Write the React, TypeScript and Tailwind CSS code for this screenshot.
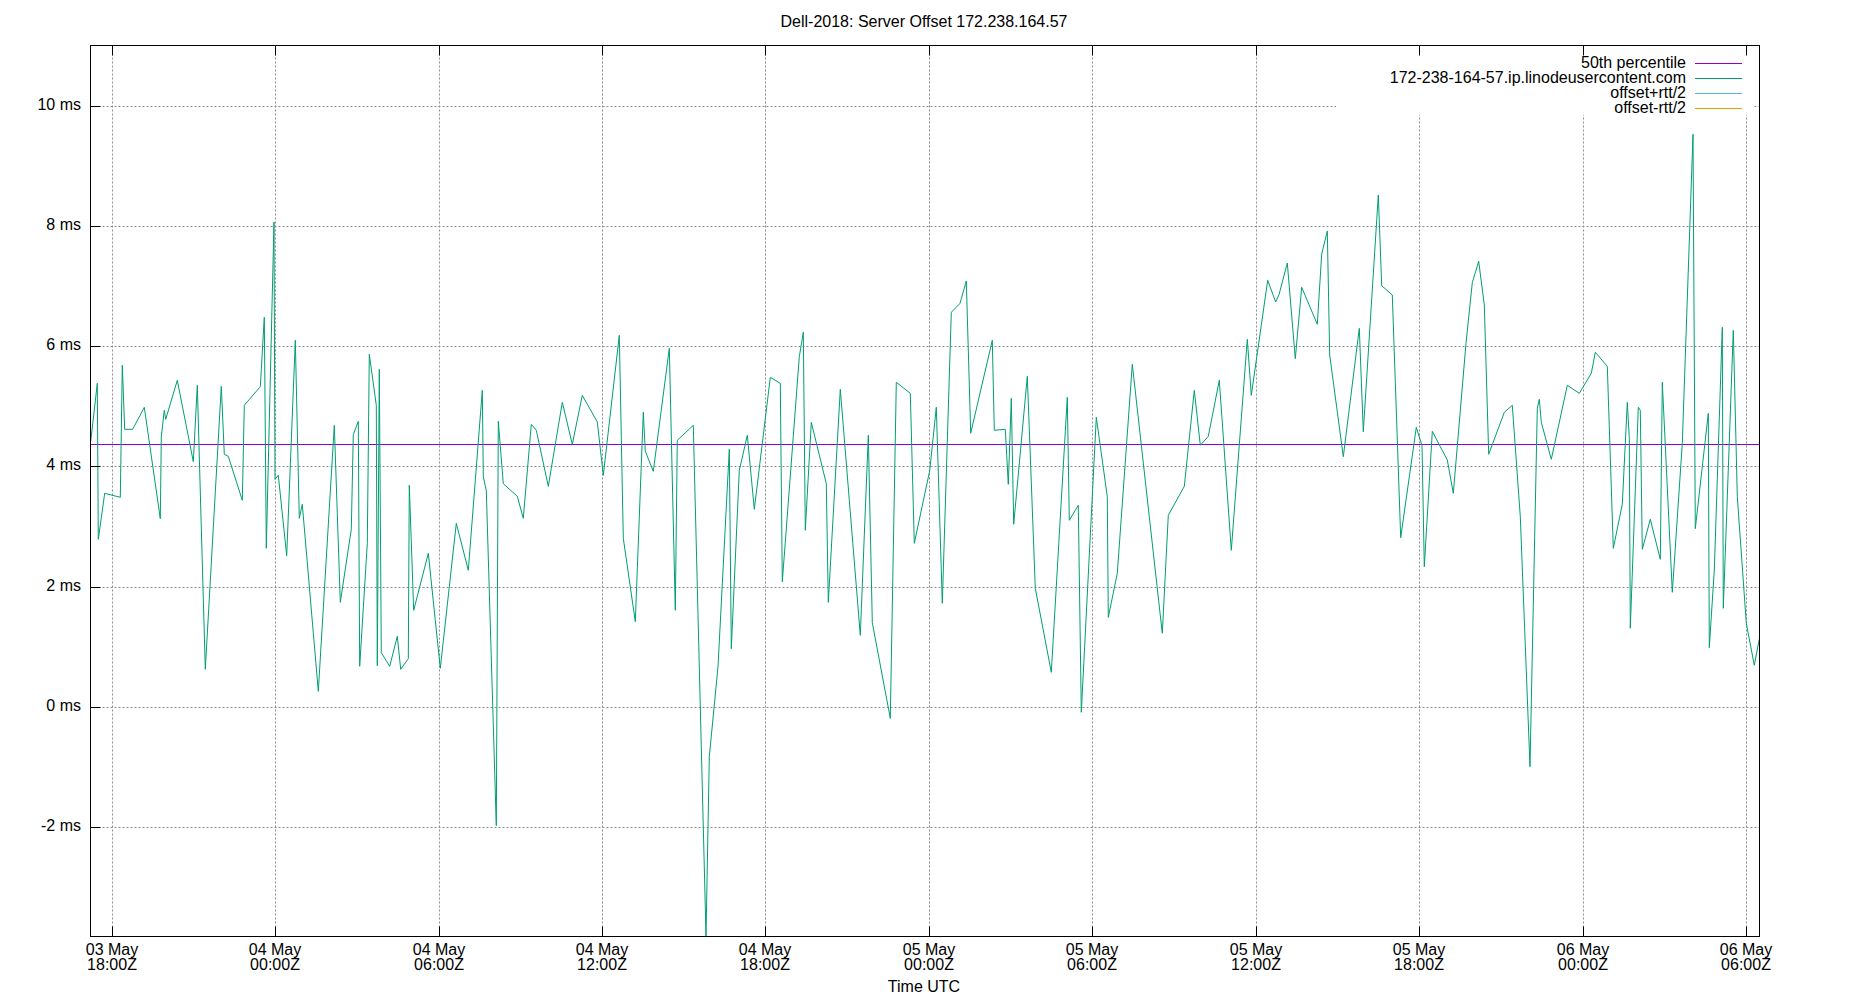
import React from "react";

type Pt = [number, number];

// traced offsets, grouped by the strip they were read from (x from strip start, y from 300, both x3)
const strips: [number, Pt[]][] = [
  [88, [[8,425],[28,250],[31,718],[50,580],[97,592],[103,196],[110,388],[134,388],[169,322],[217,656],[220,410],[229,331],[233,358],[268,241],[316,485],[328,256],[352,1108],[400,259],[409,463],[421,469],[463,601],[469,316],[517,260],[529,52],[535,745],[558,-234],[561,538],[571,526],[596,767],[622,121],[634,655],[643,613],[691,1174],[739,376],[757,907],[790,688],[796,404],[811,364],[815,1099],[838,730],[844,163],[865,316],[868,1097],[874,208],[880,1058],[905,1099],[928,1009],[938,1108],[961,1076],[964,556],[977,931]]],
  [428, [[1,760],[37,1105],[85,670],[121,811],[163,271],[166,530],[175,572],[205,1577],[211,364],[226,551],[268,589],[286,655],[310,373],[325,391],[361,559],[403,307],[433,433],[463,286],[508,366],[526,526],[574,106],[586,715],[622,965],[646,337],[652,454],[676,514],[724,145],[742,931],[748,421],[796,376],[834,1908],[844,1370],[870,1100],[904,448],[910,1046],[934,511],[958,406],[979,628]]],
  [768, [[7,232],[37,250],[43,845],[94,170],[106,97],[112,691],[130,367],[175,551],[181,907],[217,268],[277,1006],[301,406],[313,968],[367,1255],[385,247],[427,280],[439,730],[485,512],[505,322],[523,910],[550,37],[576,10],[595,-57],[608,400],[673,121],[679,391],[712,388],[721,553],[730,295],[737,673],[778,229],[802,865],[850,1117],[898,292],[904,661],[931,616],[940,1237],[985,352],[1018,590]]],
  [1108, [[1,952],[28,820],[73,193],[163,1000],[181,646],[229,559],[259,271],[277,436],[301,409],[334,241],[370,751],[418,118],[430,286],[479,-59],[503,6],[513,-16],[538,-111],[562,176],[581,-38],[628,73],[641,-138],[658,-207],[665,165],[706,470],[754,85],[766,395],[811,-315],[821,-43],[853,-15],[878,713],[925,382],[942,437],[949,800],[973,394],[1018,480]]],
  [1440, [[40,580],[78,130],[97,-52],[116,-116],[133,15],[146,463],[193,337],[217,316],[241,650],[270,1400],[292,325],[298,298],[304,367],[334,478],[382,256],[418,280],[454,220],[466,157],[502,199],[520,745],[547,613],[562,307],[568,415],[571,985],[595,322],[601,331],[607,748],[631,658],[661,778],[667,247],[697,877],[727,430],[759,-497],[766,686],[805,340],[808,1043],[823,810],[847,82],[850,925],[880,91],[892,590],[919,970],[943,1096],[958,1017]]],
];

const offsetLine = strips
  .flatMap(([x0, pts]) => pts.map(([x, y]) => `${(x0 + x / 3).toFixed(1)},${(300 + y / 3).toFixed(1)}`))
  .join(" ");

const xTicks = [
  { x: 112.5, day: "03 May", time: "18:00Z" },
  { x: 275.5, day: "04 May", time: "00:00Z" },
  { x: 439.5, day: "04 May", time: "06:00Z" },
  { x: 602.5, day: "04 May", time: "12:00Z" },
  { x: 765.5, day: "04 May", time: "18:00Z" },
  { x: 929.5, day: "05 May", time: "00:00Z" },
  { x: 1092.5, day: "05 May", time: "06:00Z" },
  { x: 1256.5, day: "05 May", time: "12:00Z" },
  { x: 1419.5, day: "05 May", time: "18:00Z" },
  { x: 1583.5, day: "06 May", time: "00:00Z" },
  { x: 1746.5, day: "06 May", time: "06:00Z" },
];

const yTicks = [
  { y: 106.5, label: "10 ms" },
  { y: 226.5, label: "8 ms" },
  { y: 346.5, label: "6 ms" },
  { y: 466.5, label: "4 ms" },
  { y: 587.5, label: "2 ms" },
  { y: 707.5, label: "0 ms" },
  { y: 827.5, label: "-2 ms" },
];

const legend = [
  { label: "50th percentile", color: "bg-[#9400d3]" },
  { label: "172-238-164-57.ip.linodeusercontent.com", color: "bg-[#009e73]" },
  { label: "offset+rtt/2", color: "bg-[#56b4e9]" },
  { label: "offset-rtt/2", color: "bg-[#e69f00]" },
];

const LEFT = 90.5;
const RIGHT = 1759.5;
const TOP = 45.5;
const BOTTOM = 936.5;

export default function App() {
  return (
    <div className="w-[1850px] h-[1000px] bg-white text-black text-base [font-family:'Liberation_Sans',Arial,sans-serif]">
      <h1 className="ml-[90px] w-[1668px] h-[45px] pt-[13px] text-center text-base leading-[18px] font-normal">
        Dell-2018: Server Offset 172.238.164.57
      </h1>

      <div className="relative h-[930px]">
        <svg width={1850} height={930} viewBox="0 45 1850 930" className="block fill-black">
          {/* grid */}
          <g className="stroke-[#8c8c8c]" strokeWidth={1} strokeDasharray="2 2">
            {yTicks.map((t) => (
              <line key={t.y} x1={LEFT} x2={RIGHT} y1={t.y} y2={t.y} />
            ))}
            {xTicks.map((t) => (
              <line key={t.x} x1={t.x} x2={t.x} y1={TOP} y2={BOTTOM} />
            ))}
          </g>

          {/* key box hides the grid behind the legend */}
          <rect x={1336} y={46} width={417} height={69} className="fill-white" />

          <line x1={LEFT} x2={RIGHT} y1={444.5} y2={444.5} strokeWidth={1} className="stroke-[#9400d3]" />
          <polyline points={offsetLine} fill="none" strokeWidth={1} className="stroke-[#009e73]" />

          {/* ticks and border */}
          <g className="stroke-black" strokeWidth={1}>
            {yTicks.map((t) => (
              <line key={t.y} x1={LEFT} x2={LEFT + 10} y1={t.y} y2={t.y} />
            ))}
            {xTicks.map((t) => (
              <React.Fragment key={t.x}>
                <line x1={t.x} x2={t.x} y1={TOP} y2={TOP + 10} />
                <line x1={t.x} x2={t.x} y1={BOTTOM} y2={BOTTOM - 10} />
              </React.Fragment>
            ))}
            <rect x={LEFT} y={TOP} width={RIGHT - LEFT} height={BOTTOM - TOP} fill="none" />
          </g>

          {yTicks.map((t) => (
            <text key={t.y} x={81} y={t.y + 3} textAnchor="end">
              {t.label}
            </text>
          ))}
          {xTicks.map((t) => (
            <text key={t.x} x={t.x - 0.5} textAnchor="middle">
              <tspan x={t.x - 0.5} y={955}>{t.day}</tspan>
              <tspan x={t.x - 0.5} y={970}>{t.time}</tspan>
            </text>
          ))}
        </svg>

        <div className="absolute top-[11px] right-[108px] flex flex-col">
          {legend.map((item) => (
            <div key={item.label} className="flex h-[15px] items-center justify-end gap-[9px] whitespace-nowrap leading-[15px]">
              <span className="mb-[2px]">{item.label}</span>
              <span className={`w-[47px] h-px ${item.color}`} />
            </div>
          ))}
        </div>
      </div>

      <div className="ml-[90px] w-[1668px] text-center leading-[18px] pt-[3px]">Time UTC</div>
    </div>
  );
}
